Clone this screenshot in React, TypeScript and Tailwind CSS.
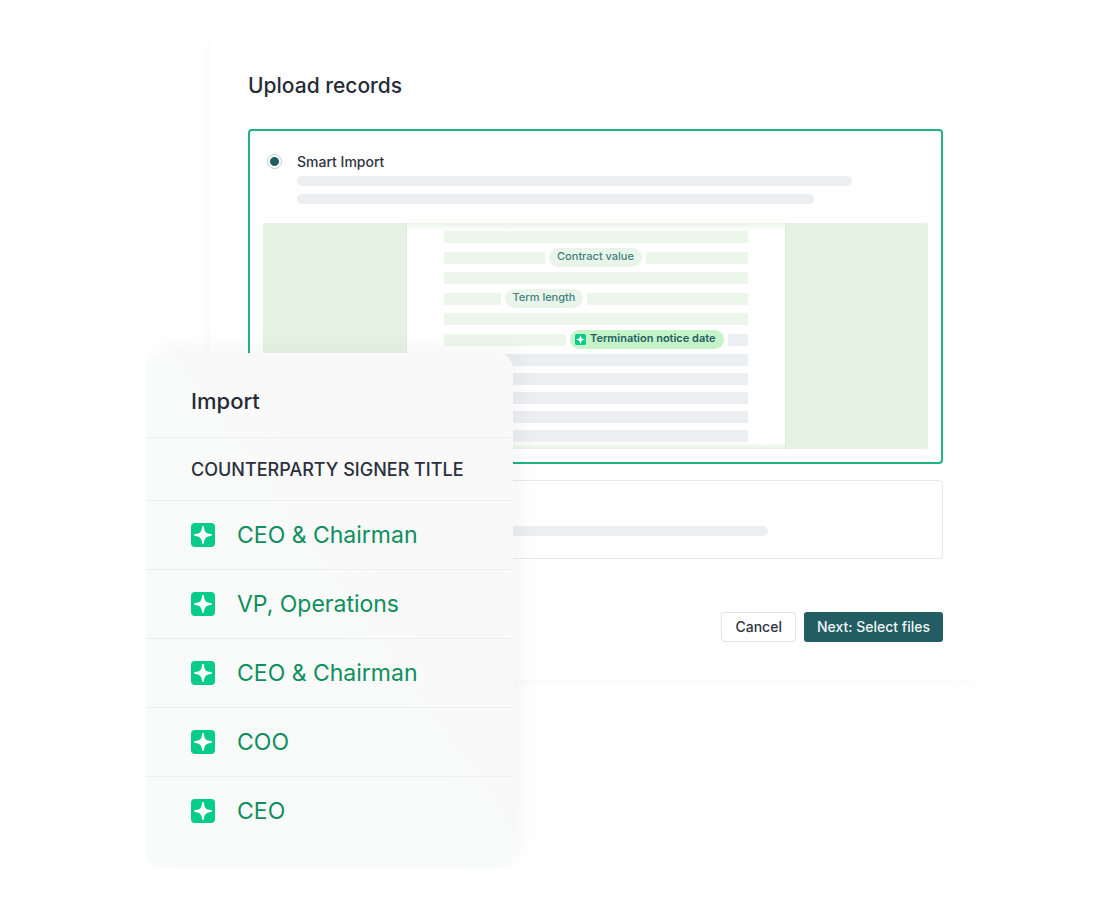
import React, { useState } from "react";

const titles = [
  "CEO & Chairman",
  "VP, Operations",
  "CEO & Chairman",
  "COO",
  "CEO",
];

const SparkIcon = ({ className }: { className: string }) => (
  <svg viewBox="0 0 24 24" className={className} aria-hidden="true">
    <rect width="24" height="24" rx="4" fill="#06cc89" />
    <path
      d="M12 3c.7 0 .9.5 1 1.200.3 4.500 2 6.300 6.800 6.900.8.100 1.200.4 1.200.9s-.4.800-1.200.9c-4.800.6-6.500 2.400-6.800 6.900-.1.700-.3 1.200-1 1.200s-.9-.5-1-1.200c-.3-4.500-2-6.300-6.800-6.900C3.400 12.800 3 12.500 3 12s.4-.8 1.200-.9c4.800-.6 6.500-2.400 6.800-6.900.1-.7.3-1.200 1-1.200z"
      fill="#fff"
    />
  </svg>
);

const Line = ({ className }: { className: string }) => (
  <div className={`h-3 ${className}`} />
);

const Pill = ({ children }: { children: React.ReactNode }) => (
  <span className="flex h-[19px] shrink-0 items-center rounded-full bg-[#e9f5ea] px-2 pb-0.5 text-[11px] font-medium text-[#43817c]">
    {children}
  </span>
);

const DocumentPreview = () => (
  <div className="mt-[19px] grid grid-cols-[3fr_8fr_3fr] overflow-hidden rounded-[3px] bg-[#e5f3e2]">
    <div />
    <div className="border-x border-[#dcebdc] bg-white">
      <div className="h-2 bg-linear-to-b from-[#e9f5e7] to-white" />
      <div className="flex flex-col gap-[5px] px-[37px]">
        <Line className="bg-[#ecf6eb]" />
        <div className="flex items-center gap-1">
          <Line className="flex-1 bg-[#ecf6eb]" />
          <Pill>Contract value</Pill>
          <Line className="flex-1 bg-[#ecf6eb]" />
        </div>
        <Line className="bg-[#ecf6eb]" />
        <div className="flex items-center gap-1">
          <Line className="w-[57px] bg-[#ecf6eb]" />
          <Pill>Term length</Pill>
          <Line className="flex-1 bg-[#ecf6eb]" />
        </div>
        <Line className="bg-[#ecf6eb]" />
        <div className="flex items-center gap-1">
          <Line className="flex-1 bg-[#ecf6eb]" />
          <span className="flex h-[19px] shrink-0 items-center gap-1 rounded-full bg-[#c4f4c8] pr-2 pl-[5px] text-[11px] font-semibold text-[#235f62]">
            <SparkIcon className="size-[11px]" />
            <span className="pb-0.5">Termination notice date</span>
          </span>
          <Line className="w-5 bg-[#edeef2]" />
        </div>
      </div>
      <div className="mt-[5px] flex flex-col gap-[7px] px-[37px]">
        <Line className="bg-[#edeef2]" />
        <Line className="bg-[#edeef2]" />
        <Line className="bg-[#edeef2]" />
        <Line className="bg-[#edeef2]" />
        <Line className="bg-[#edeef2]" />
      </div>
      <div className="h-[7px] bg-linear-to-b from-white to-[#e5f3e2]" />
    </div>
    <div />
  </div>
);

const UploadCard = () => {
  const [smart, setSmart] = useState(true);
  return (
    <section className="ml-16 rounded-xl bg-white px-[38px] pt-9 pb-[38px] shadow-[-4px_4px_16px_rgba(0,0,0,0.025)]">
      <h1 className="text-[21px] leading-8 font-medium text-[#262b38]">
        Upload records
      </h1>
      <div className="mt-[27px] rounded-[4px] border-2 border-[#1fb482] px-[13px] pt-[21px] pb-[13px]">
        <div className="flex items-start pl-1">
          <input
            id="smart-import"
            type="radio"
            name="import-type"
            checked={smart}
            onChange={() => setSmart(true)}
            className="mt-0.5 size-[15px] shrink-0 appearance-none rounded-full border border-[#bccace] bg-white checked:bg-[radial-gradient(circle,#225d63_4px,#fff_5px)]"
          />
          <label
            htmlFor="smart-import"
            className="ml-[15px] text-sm leading-5 font-medium text-[#2f3440]"
          >
            Smart Import
          </label>
        </div>
        <div className="mt-1 ml-[34px] flex flex-col gap-2">
          <div className="h-2.5 w-[88%] rounded-full bg-[#edeef2]" />
          <div className="h-2.5 w-[82%] rounded-full bg-[#edeef2]" />
        </div>
        <DocumentPreview />
      </div>
      <div className="mt-4 rounded-[4px] border border-[#e8e9ed] pt-[45px] pb-[22px] pl-12">
        <div className="h-2.5 w-[73%] rounded-full bg-[#edeef2]" />
      </div>
      <div className="mt-[53px] flex justify-end gap-2 text-sm font-medium">
        <button
          type="button"
          className="h-[30px] rounded-[3px] border border-[#e3e5ea] px-[13px] text-[#2f3440]"
        >
          Cancel
        </button>
        <button
          type="button"
          className="h-[30px] rounded-[3px] bg-[#225d63] px-[13px] text-[#f1f6f6]"
        >
          Next: Select files
        </button>
      </div>
    </section>
  );
};

const ImportCard = () => (
  <section className="absolute top-[319px] left-0 w-[367px] rounded-2xl bg-linear-to-tr from-[#f9fbfa] from-40% to-[#f9f9f9] to-60% pb-[23px] shadow-[10px_-8px_20px_rgba(0,0,0,0.035)]">
    <h2 className="border-b border-[#eeeef0] pt-8 pb-5 pl-[45px] text-[22px] leading-8 font-medium text-[#262b38]">
      Import
    </h2>
    <table className="w-full text-left">
      <thead>
        <tr className="h-[62px] border-b border-[#eeeef0]">
          <th className="pt-0.5 pl-[45px] text-lg font-medium text-[#2b303c]">
            COUNTERPARTY SIGNER TITLE
          </th>
        </tr>
      </thead>
      <tbody>
        {titles.map((title, i) => (
          <tr
            key={i}
            className="h-[69px] border-b border-[#eeeef0] last:border-b-0"
          >
            <td className="pl-[45px]">
              <div className="flex items-center gap-[22px] text-[23px] leading-8 text-[#0d8f5e]">
                <SparkIcon className="size-6" />
                {title}
              </div>
            </td>
          </tr>
        ))}
      </tbody>
    </table>
  </section>
);

export default function App() {
  return (
    <main className="min-h-screen bg-white pt-[34px] pr-[119px] pb-8 pl-[146px] font-['Inter',sans-serif]">
      <div className="relative">
        <UploadCard />
        <ImportCard />
      </div>
    </main>
  );
}
